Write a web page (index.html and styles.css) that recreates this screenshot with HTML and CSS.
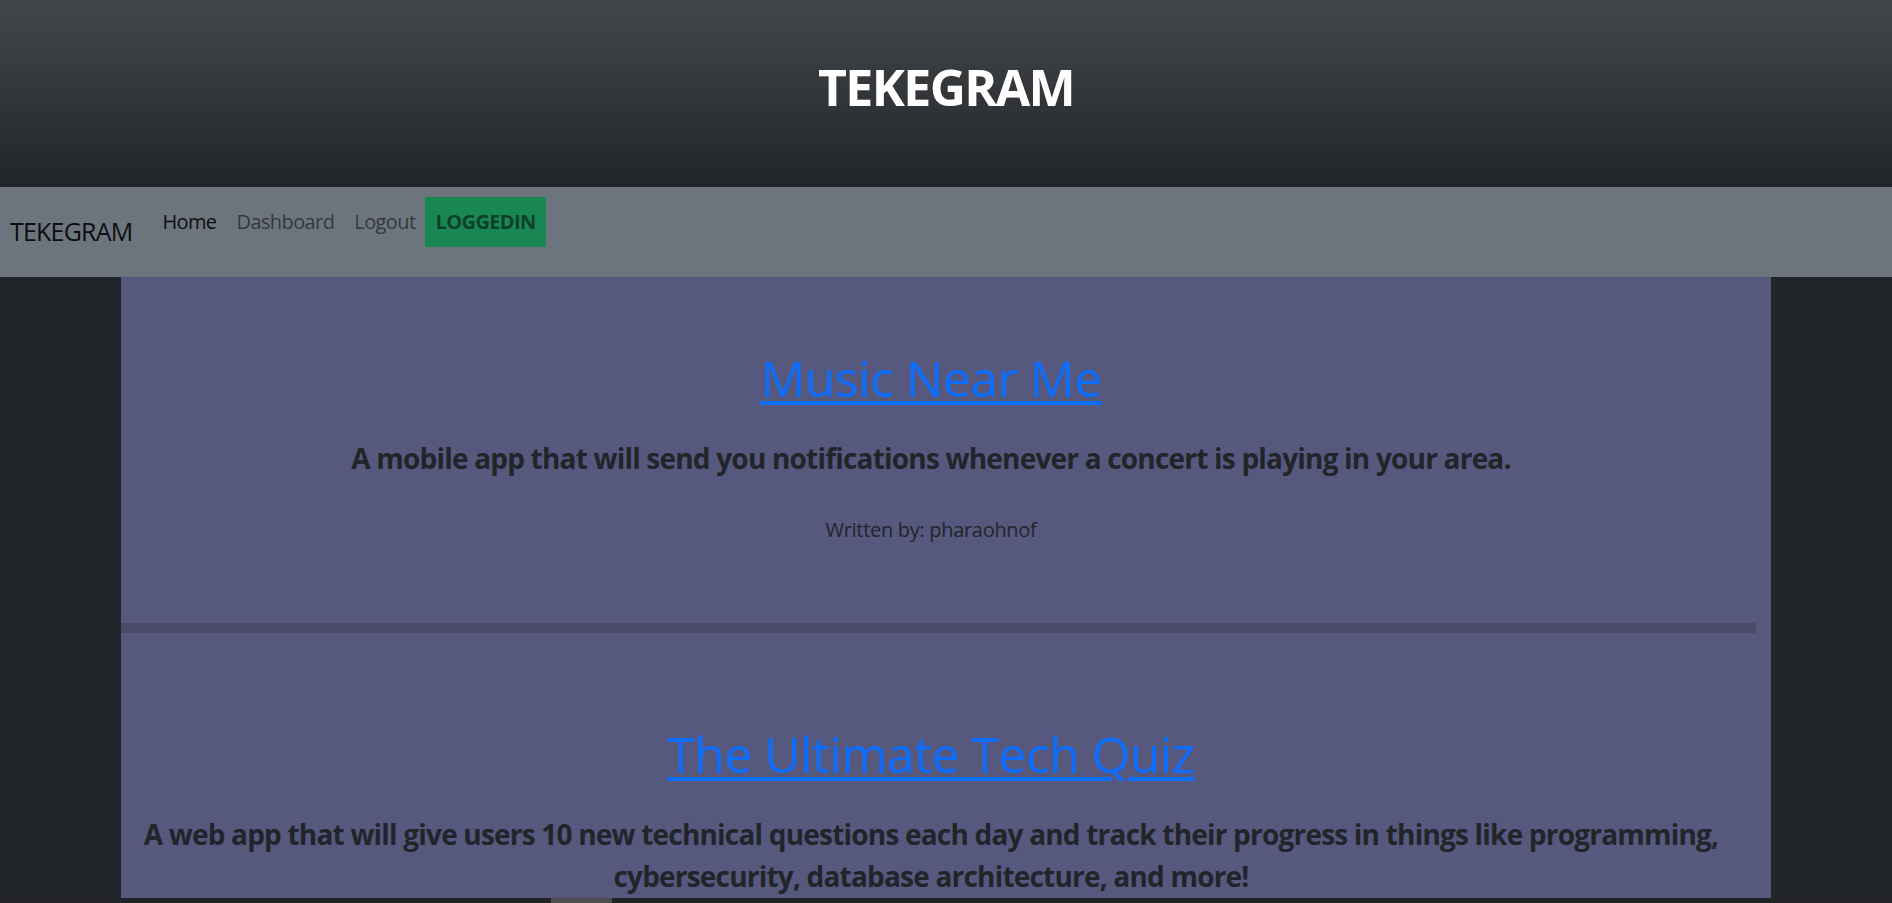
FILE: index.html
```html
<!DOCTYPE html>
<html lang="en">
<head>
<meta charset="utf-8">
<title>Tekegram</title>
<link rel="stylesheet" href="styles.css">
</head>
<body>
<header class="hero">
  <h1 class="hero-title">TEKEGRAM</h1>
</header>
<nav class="navbar">
  <a class="brand" href="#">TEKEGRAM</a>
  <ul class="nav-list">
    <li><a class="nav-link active" href="#">Home</a></li>
    <li><a class="nav-link" href="#">Dashboard</a></li>
    <li><a class="nav-link" href="#">Logout</a></li>
    <li><span class="nav-link status">LOGGEDIN</span></li>
  </ul>
</nav>
<main class="feed">
  <article class="post">
    <h2 class="post-title"><a href="#">Music Near Me</a></h2>
    <p class="post-desc">A mobile app that will send you notifications whenever a concert is playing in your area.</p>
    <p class="post-author">Written by: pharaohnof</p>
  </article>
  <hr class="divider">
  <article class="post">
    <h2 class="post-title"><a href="#">The Ultimate Tech Quiz</a></h2>
    <p class="post-desc">A web app that will give users 10 new technical questions each day and track their progress in things like programming, cybersecurity, database architecture, and more!</p>
    <p class="post-author">Written by: pharaohnof</p>
  </article>
</main>
<div class="hscroll"><div class="hscroll-thumb"></div></div>
</body>
</html>
```

FILE: styles.css
```css
* { box-sizing: border-box; }

html, body {
  margin: 0;
  padding: 0;
}

body {
  background: #212529;
  font-family: "Open Sans", "Noto Sans", sans-serif;
  color: #212529;
  overflow: hidden;
}

.hero {
  height: 187px;
  padding-top: 57px;
  background: linear-gradient(180deg, #44474a 0%, #212529 100%);
  text-align: center;
}

.hero-title {
  margin: 0;
  font-size: 50px;
  line-height: 60px;
  font-weight: 700;
  color: #ffffff;
  letter-spacing: -1.6px;
}

.navbar {
  display: flex;
  align-items: center;
  padding: 10px 10px;
  background: #6c757d;
}

.brand {
  padding: 6px 0;
  margin-right: 20px;
  font-size: 25px;
  line-height: 37.5px;
  color: rgba(0, 0, 0, 0.9);
  text-decoration: none;
  letter-spacing: -0.8px;
}

.nav-list {
  display: flex;
  list-style: none;
  margin: 0 0 20px 0;
  padding: 0;
}

.nav-link {
  display: block;
  padding: 10px 10px;
  font-size: 20px;
  line-height: 30px;
  color: rgba(0, 0, 0, 0.55);
  text-decoration: none;
  letter-spacing: -0.6px;
}

.nav-link.active {
  color: rgba(0, 0, 0, 0.9);
}

.nav-link.status {
  background: #198754;
  font-weight: 700;
}

.feed {
  width: 1650px;
  margin: 0 auto;
  background: #57587e;
  padding-bottom: 40px;
}

.post {
  padding: 71px 30px 78px 0;
  text-align: center;
}

.post-title {
  margin: 0;
  font-size: 50px;
  line-height: 60px;
  font-weight: 400;
  letter-spacing: -0.6px;
}

.post-title a {
  color: #0d6efd;
  text-decoration: underline;
  text-decoration-thickness: 4px;
  text-underline-offset: 4px;
}

.post-desc {
  margin: 29px 0 0 0;
  font-size: 28px;
  line-height: 42px;
  font-weight: 700;
  color: #212529;
  letter-spacing: -0.8px;
}

.post-author {
  margin: 36px 0 0 0;
  font-size: 20px;
  line-height: 30px;
  font-weight: 500;
  color: #212529;
  letter-spacing: -0.3px;
}

.divider {
  height: 10px;
  margin: 0 15px 20px 0;
  border: 0;
  background: #4a4b6a;
  opacity: 1;
}

.hscroll {
  position: fixed;
  left: 0;
  right: 0;
  bottom: 0;
  height: 5px;
  background: #222326;
}

.hscroll-thumb {
  width: 61px;
  height: 5px;
  margin-left: 551px;
  background: #4e4e50;
}
```
